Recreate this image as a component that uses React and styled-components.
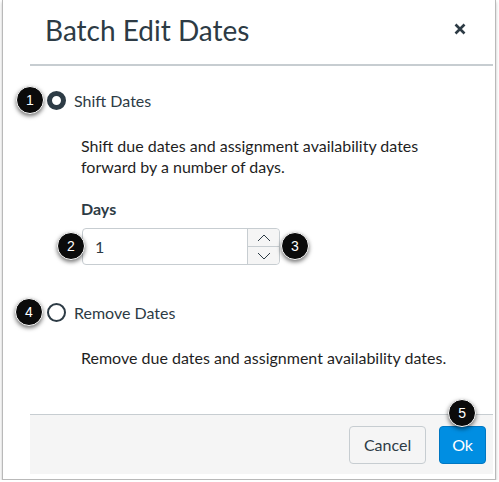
import React from 'react'
import styled, { createGlobalStyle } from 'styled-components'

const Global = createGlobalStyle`
  html, body {
    margin: 0;
    padding: 0;
    background: #fff;
    font-family: Lato, "Noto Sans", sans-serif;
    color: #2d3b45;
  }
`

const Frame = styled.div`
  position: relative;
  margin-left: 2px;
  width: 494px;
  height: 480px;
  box-sizing: border-box;
  border: 1px solid #b9b9b9;
  border-top: none;
  box-shadow: 0 2px 3px rgba(0, 0, 0, 0.25);
  background: #fff;
  display: flex;
  flex-direction: column;
`

const Header = styled.div`
  height: 64px;
  display: flex;
  align-items: center;
  justify-content: space-between;
  padding: 0 29px 0 42px;
  box-sizing: border-box;
`

const Title = styled.h1`
  margin: 0;
  margin-top: -4px;
  font-size: 28px;
  font-weight: 400;
  color: #2d3b45;
`

const Close = styled.button`
  border: none;
  background: none;
  padding: 0;
  margin-top: -6px;
  display: flex;
  cursor: pointer;
`

const Rule = styled.div`
  margin: 0 2px 0 27px;
  border-top: 2px solid #c7cdd1;
`

const Body = styled.div`
  flex: 1;
  padding: 24px 0 0 44px;
`

const Option = styled.label`
  position: relative;
  display: flex;
  align-items: center;
  gap: 8px;
  height: 20px;
  font-size: 16px;
  color: #2d3b45;
`

const Radio = styled.span`
  width: 19px;
  height: 19px;
  box-sizing: border-box;
  border-radius: 50%;
  border: ${p => (p.checked ? '5px solid #2d3b45' : '2px solid #2d3b45')};
  background: #fff;
`

const Panel = styled.div`
  margin-left: 34px;
  padding-top: 25px;
  padding-bottom: ${p => p.gap}px;
`

const Text = styled.p`
  margin: 0;
  font-size: 16px;
  line-height: 21px;
  color: #1f1f1f;
  max-width: ${p => (p.wide ? 'none' : '360px')};
`

const FieldLabel = styled.div`
  margin-top: 21px;
  font-size: 16px;
  line-height: 21px;
  font-weight: 700;
  color: #2d3b45;
`

const NumberBox = styled.div`
  position: relative;
  margin-top: 9px;
  margin-left: 1px;
  width: 198px;
  height: 37px;
  box-sizing: border-box;
  border: 1px solid #c7cdd1;
  border-radius: 4px;
  display: flex;
  background: #fff;
`

const Value = styled.div`
  flex: 1;
  display: flex;
  align-items: center;
  padding-left: 12px;
  font-size: 16px;
  color: #2d3b45;
`

const Spinner = styled.div`
  width: 31px;
  border-left: 1px solid #c7cdd1;
  display: flex;
  flex-direction: column;
  background: #f5f5f5;
  border-radius: 0 4px 4px 0;
`

const Step = styled.div`
  flex: 1;
  display: flex;
  align-items: center;
  justify-content: center;
  & + & {
    border-top: 1px solid #c7cdd1;
  }
`

const Footer = styled.div`
  margin: 0 2px 5px 27px;
  height: 60px;
  border-top: 1px solid #c7cdd1;
  background: #f5f5f5;
  display: flex;
  align-items: center;
  justify-content: flex-end;
  gap: 13px;
  padding-right: 7px;
  box-sizing: border-box;
`

const Button = styled.button`
  position: relative;
  height: 38px;
  padding: 0 ${p => (p.primary ? 12 : 14)}px;
  border-radius: 4px;
  font-family: Lato, "Noto Sans", sans-serif;
  font-size: 16px;
  border: 1px solid ${p => (p.primary ? '#0077c2' : '#c7cdd1')};
  background: ${p => (p.primary ? '#008ee2' : '#f5f5f5')};
  color: ${p => (p.primary ? '#fff' : '#2d3b45')};
  cursor: pointer;
`

const Badge = styled.span`
  position: absolute;
  width: 26px;
  height: 26px;
  border-radius: 50%;
  background: #0b0b0b;
  border: 1px solid #fff;
  box-shadow: 0 2px 4px rgba(0, 0, 0, 0.55);
  color: #fff;
  font-family: "Liberation Sans", Arial, sans-serif;
  font-size: 14px;
  display: flex;
  align-items: center;
  justify-content: center;
  left: ${p => p.x}px;
  top: ${p => p.y}px;
  z-index: 2;
`

const Chevron = ({ up }) => (
  <svg width="14" height="8" viewBox="0 0 14 8">
    <path
      d={up ? 'M1 7 L7 1 L13 7' : 'M1 1 L7 7 L13 1'}
      fill="none"
      stroke="#2d3b45"
      strokeWidth="1"
    />
  </svg>
)

const App = () => {
  return (
    <>
      <Global />
      <Frame>
        <Header>
          <Title>Batch Edit Dates</Title>
          <Close aria-label="Close">
            <svg width="12" height="12" viewBox="0 0 12 12">
              <path d="M1.5 1.5 L10.5 10.5 M10.5 1.5 L1.5 10.5" stroke="#2d3b45" strokeWidth="2.6" />
            </svg>
          </Close>
        </Header>
        <Rule />
        <Body>
          <Option>
            <Badge x={-31} y={-4}>1</Badge>
            <Radio checked />
            Shift Dates
          </Option>
          <Panel gap={37}>
            <Text>Shift due dates and assignment availability dates forward by a number of days.</Text>
            <FieldLabel>Days</FieldLabel>
            <NumberBox>
              <Badge x={-26} y={3}>2</Badge>
              <Value>1</Value>
              <Spinner>
                <Step><Chevron up /></Step>
                <Step><Chevron /></Step>
              </Spinner>
              <Badge x={198} y={3}>3</Badge>
            </NumberBox>
          </Panel>
          <Option>
            <Badge x={-32} y={-4}>4</Badge>
            <Radio />
            Remove Dates
          </Option>
          <Panel gap={0}>
            <Text wide>Remove due dates and assignment availability dates.</Text>
          </Panel>
        </Body>
        <Footer>
          <Button>Cancel</Button>
          <Button primary>
            <Badge x={8} y={-28}>5</Badge>
            Ok
          </Button>
        </Footer>
      </Frame>
    </>
  )
}

export default App
